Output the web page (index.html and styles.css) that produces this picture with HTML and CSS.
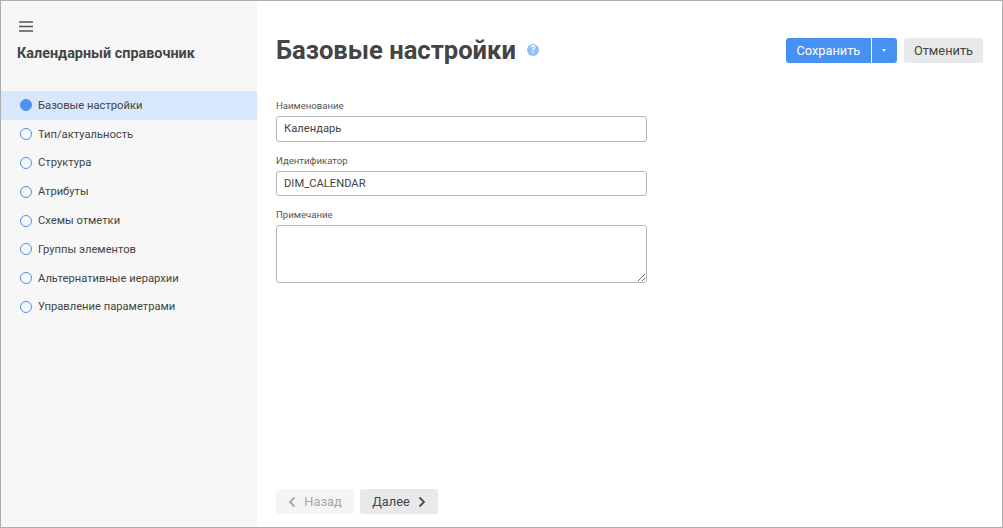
FILE: index.html
```html
<!DOCTYPE html>
<html lang="ru">
<head>
  <meta charset="UTF-8">
  <title>Календарный справочник</title>
  <link rel="stylesheet" href="styles.css">
</head>
<body>
  <div class="window">
    <aside class="sidebar">
      <button class="menu-btn" aria-label="Меню">
        <svg width="14" height="11" viewBox="0 0 14 11"><path d="M0 1h14M0 5.500h14M0 10h14" stroke="#555" stroke-width="1.3" fill="none"/></svg>
      </button>
      <div class="sidebar-title">Календарный справочник</div>
      <ul class="steps">
        <li class="step active"><span class="dot"></span>Базовые настройки</li>
        <li class="step"><span class="dot"></span>Тип/актуальность</li>
        <li class="step"><span class="dot"></span>Структура</li>
        <li class="step"><span class="dot"></span>Атрибуты</li>
        <li class="step"><span class="dot"></span>Схемы отметки</li>
        <li class="step"><span class="dot"></span>Группы элементов</li>
        <li class="step"><span class="dot"></span>Альтернативные иерархии</li>
        <li class="step"><span class="dot"></span>Управление параметрами</li>
      </ul>
    </aside>

    <main class="content">
      <header class="head">
        <h1>Базовые настройки</h1>
        <span class="help">?</span>
        <div class="actions">
          <div class="split">
            <button class="btn primary save">Сохранить</button>
            <button class="btn primary caret" aria-label="Ещё"><span class="caret-icon"></span></button>
          </div>
          <button class="btn plain">Отменить</button>
        </div>
      </header>

      <form class="form">
        <label class="field">
          <span class="field-label">Наименование</span>
          <input type="text" value="Календарь">
        </label>
        <label class="field">
          <span class="field-label">Идентификатор</span>
          <input type="text" value="DIM_CALENDAR">
        </label>
        <label class="field">
          <span class="field-label">Примечание</span>
          <textarea></textarea>
        </label>
      </form>

      <footer class="nav">
        <button class="btn plain nav-btn disabled">
          <svg width="8" height="12" viewBox="0 0 8 12"><path d="M6.500 1.500L2 6l4.500 4.500" stroke="#a4a6a9" stroke-width="1.800" fill="none"/></svg>
          Назад
        </button>
        <button class="btn plain nav-btn">
          Далее
          <svg width="8" height="12" viewBox="0 0 8 12"><path d="M1.500 1.500L6 6l-4.500 4.500" stroke="#4a4a4a" stroke-width="1.800" fill="none"/></svg>
        </button>
      </footer>
    </main>
  </div>
</body>
</html>
```

FILE: styles.css
```css
html, body {
  margin: 0;
  height: 100%;
}

body {
  font-family: Roboto, "Liberation Sans", sans-serif;
  color: #444;
  background: #fff;
}

.window {
  box-sizing: border-box;
  width: 1003px;
  height: 528px;
  border: 1px solid #adadad;
  display: flex;
  overflow: hidden;
}

.sidebar {
  width: 256px;
  flex: none;
  background: #f7f7f7;
}

.menu-btn {
  display: block;
  margin: 20px 0 0 18px;
  padding: 0;
  height: 11px;
  line-height: 0;
  border: none;
  background: none;
}

.sidebar-title {
  margin: 13px 0 0 16px;
  font-size: 14.4px;
  line-height: 18px;
  font-weight: 700;
}

.steps {
  list-style: none;
  margin: 28px 0 0;
  padding: 0;
}

.step {
  display: flex;
  align-items: center;
  height: 28.8px;
  padding-left: 19px;
  font-size: 11.2px;
}

.step.active {
  background: #d8e7fb;
}

.dot {
  box-sizing: border-box;
  width: 12px;
  height: 12px;
  margin-right: 6px;
  border: 1.5px solid #4c92f0;
  border-radius: 50%;
}

.active .dot {
  background: #4c92f0;
}

.content {
  flex: 1;
  display: flex;
  flex-direction: column;
  padding: 0 19px 13px;
  min-width: 0;
}

.head {
  display: flex;
  align-items: center;
  height: 38px;
  margin-top: 30px;
}

h1 {
  margin: 0;
  font-size: 25.6px;
  line-height: 38px;
  font-weight: 700;
}

.help {
  width: 12px;
  height: 12px;
  margin-left: 11px;
  border-radius: 50%;
  background: #93bff7;
  color: #fff;
  font-size: 10px;
  font-weight: 700;
  line-height: 12px;
  text-align: center;
}

.actions {
  margin-left: auto;
  display: flex;
  gap: 7px;
}

.split {
  display: flex;
  gap: 1px;
}

.btn {
  height: 25px;
  padding: 0 10px;
  border: none;
  border-radius: 3px;
  font-family: inherit;
  font-size: 12.8px;
}

.primary {
  background: #4791f2;
  color: #fff;
}

.save {
  width: 85px;
  border-radius: 3px 0 0 3px;
}

.caret {
  width: 25px;
  padding: 0;
  border-radius: 0 3px 3px 0;
  display: flex;
  align-items: center;
  justify-content: center;
}

.caret-icon {
  border-left: 2.5px solid transparent;
  border-right: 2.5px solid transparent;
  border-top: 3px solid #fff;
}

.plain {
  background: #e8e9eb;
  color: #444;
}

.form {
  margin-top: 31px;
  width: 371px;
  display: flex;
  flex-direction: column;
  gap: 13px;
}

.field {
  display: block;
}

.field-label {
  display: block;
  font-size: 9.6px;
  line-height: 12px;
  margin-bottom: 4px;
  color: #555;
}

input, textarea {
  display: block;
  box-sizing: border-box;
  width: 100%;
  border: 1px solid #b5b6bb;
  border-radius: 3px;
  padding: 0 7px;
  font-family: inherit;
  font-size: 11.2px;
  color: #444;
  background: #fff;
  outline: none;
}

input {
  height: 25.6px;
}

textarea {
  height: 58px;
}

.nav {
  margin-top: auto;
  display: flex;
  gap: 6px;
}

.nav-btn {
  width: 78px;
  display: flex;
  align-items: center;
  justify-content: center;
  gap: 8px;
}

.disabled {
  background: #f5f5f5;
  color: #a4a6a9;
}
```
